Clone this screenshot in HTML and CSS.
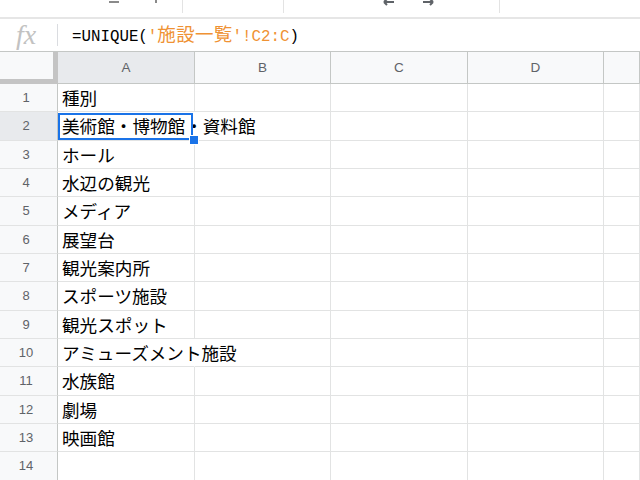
FILE: index.html
```html
<!DOCTYPE html>
<html lang="ja">
<head>
<meta charset="utf-8">
<link rel="stylesheet" href="styles.css">
</head>
<body>
<div class="toolbar">
  <span class="tb-dash"></span>
  <span class="tb-tick"></span>
  <span class="tb-div tb-div1"></span>
  <span class="tb-div tb-div2"></span>
  <svg class="tb-arrow tb-arrow-l" width="11" height="6" viewBox="0 0 11 6"><path d="M1 2H11M1 2L5 -2M1 2L4 5" stroke="#5f6368" stroke-width="2" fill="none"/></svg>
  <svg class="tb-arrow tb-arrow-r" width="11" height="6" viewBox="0 0 11 6"><path d="M0 2H10M10 2L6 -2M10 2L7 5" stroke="#5f6368" stroke-width="2" fill="none"/></svg>
  <span class="tb-div tb-div3"></span>
</div>
<div class="formula-bar">
  <div class="fx">fx</div>
  <div class="fsep"></div>
  <div class="formula">=UNIQUE(<span class="ref">'<span class="cjk">施設一覧</span>'!C2:C</span>)</div>
</div>
<div class="grid">
  <div class="c corner"></div>
  <div class="c hd sel">A</div>
  <div class="c hd">B</div>
  <div class="c hd">C</div>
  <div class="c hd">D</div>
  <div class="c hd"></div>

  <div class="c rh">1</div><div class="c">種別</div><div class="c"></div><div class="c"></div><div class="c"></div><div class="c"></div>
  <div class="c rh sel">2</div><div class="c ov active">美術館・博物館・資料館<span class="sel-box"></span><span class="handle"></span></div><div class="c"></div><div class="c"></div><div class="c"></div><div class="c"></div>
  <div class="c rh">3</div><div class="c">ホール</div><div class="c"></div><div class="c"></div><div class="c"></div><div class="c"></div>
  <div class="c rh">4</div><div class="c">水辺の観光</div><div class="c"></div><div class="c"></div><div class="c"></div><div class="c"></div>
  <div class="c rh">5</div><div class="c">メディア</div><div class="c"></div><div class="c"></div><div class="c"></div><div class="c"></div>
  <div class="c rh">6</div><div class="c">展望台</div><div class="c"></div><div class="c"></div><div class="c"></div><div class="c"></div>
  <div class="c rh">7</div><div class="c">観光案内所</div><div class="c"></div><div class="c"></div><div class="c"></div><div class="c"></div>
  <div class="c rh">8</div><div class="c">スポーツ施設</div><div class="c"></div><div class="c"></div><div class="c"></div><div class="c"></div>
  <div class="c rh">9</div><div class="c">観光スポット</div><div class="c"></div><div class="c"></div><div class="c"></div><div class="c"></div>
  <div class="c rh">10</div><div class="c ov">アミューズメント施設</div><div class="c"></div><div class="c"></div><div class="c"></div><div class="c"></div>
  <div class="c rh">11</div><div class="c">水族館</div><div class="c"></div><div class="c"></div><div class="c"></div><div class="c"></div>
  <div class="c rh">12</div><div class="c">劇場</div><div class="c"></div><div class="c"></div><div class="c"></div><div class="c"></div>
  <div class="c rh">13</div><div class="c">映画館</div><div class="c"></div><div class="c"></div><div class="c"></div><div class="c"></div>
  <div class="c rh">14</div><div class="c"></div><div class="c"></div><div class="c"></div><div class="c"></div><div class="c"></div>
</div>
</body>
</html>
```
FILE: styles.css
```css
html, body {
  margin: 0;
  padding: 0;
  background: #ffffff;
}
body {
  width: 640px;
  height: 480px;
  overflow: hidden;
  font-family: "Noto Sans CJK JP", "Liberation Sans", sans-serif;
}

/* top toolbar (cut off) */
.toolbar {
  display: flex;
  align-items: flex-start;
  height: 17px;
  border-bottom: 2px solid #e6e6e6;
  overflow: hidden;
}
.tb-dash {
  margin-left: 109px;
  margin-top: 1px;
  width: 10px;
  height: 2px;
  background: #8a8a8a;
}
.tb-tick {
  margin-left: 36px;
  width: 2px;
  height: 3px;
  background: #8a8a8a;
}
.tb-div {
  width: 1px;
  height: 13px;
  background: #e3e3e3;
}
.tb-div1 { margin-left: 25px; }
.tb-div2 { margin-left: 100px; }
.tb-arrow { display: block; flex: none; }
.tb-arrow-l { margin-left: 99px; }
.tb-arrow-r { margin-left: 29px; }
.tb-div3 { margin-left: 65px; }

/* formula bar */
.formula-bar {
  display: flex;
  align-items: center;
  height: 32px;
  border-bottom: 1px solid #c4c7c5;
}
.fx {
  width: 57px;
  box-sizing: border-box;
  padding-right: 5px;
  text-align: center;
  font-family: "Liberation Serif", serif;
  font-style: italic;
  font-size: 28px;
  line-height: 32px;
  color: #c2c2c2;
}
.fsep {
  width: 1px;
  height: 22px;
  background: #dadce0;
}
.formula {
  margin-left: 14px;
  font-family: "Liberation Mono", "Noto Sans CJK JP", monospace;
  font-size: 15.8px;
  line-height: 20px;
  color: #000000;
  white-space: nowrap;
}
.ref { color: #ef9234; }
.cjk {
  font-family: "Noto Sans CJK JP", sans-serif;
  font-size: 18.5px;
  letter-spacing: 0.3px;
}

/* grid */
.grid {
  display: grid;
  grid-template-columns: 58px 137px 136px 136.5px 136.5px 1fr;
  grid-template-rows: 32px repeat(14, 28.333px);
}
.c {
  box-sizing: border-box;
  min-width: 0;
  border-right: 1px solid #e2e3e3;
  border-bottom: 1px solid #e2e3e3;
  padding-left: 4px;
  font-size: 17.6px;
  line-height: 27px;
  color: #000000;
  white-space: nowrap;
}
.ov { border-right-color: transparent; }
.active { position: relative; }
.sel-box {
  position: absolute;
  top: 1px;
  left: 0;
  right: 1px;
  bottom: 0;
  border: 2px solid #1a73e8;
}
.handle {
  position: absolute;
  right: -5px;
  bottom: -5px;
  width: 8px;
  height: 8px;
  background: #1a73e8;
  border: 1px solid #ffffff;
  z-index: 2;
}

.corner {
  background: #f8f9fa;
  border-right: 5px solid #c4c4c4;
  border-bottom: 5px solid #c4c4c4;
  padding: 0;
}
.hd {
  background: #f8f9fa;
  border-right-color: #c4c7c5;
  border-bottom-color: #c4c7c5;
  padding: 0;
  text-align: center;
  font-family: "Liberation Sans", Arial, sans-serif;
  font-size: 13.5px;
  line-height: 31px;
  color: #5f6368;
}
.hd.sel { background: #e8eaed; }
.rh {
  background: #f8f9fa;
  border-right-color: #c4c7c5;
  padding: 0 5px 0 0;
  text-align: center;
  font-family: "Liberation Sans", Arial, sans-serif;
  font-size: 13px;
  line-height: 28px;
  color: #5f6368;
}
.rh.sel { background: #e8eaed; }
```
